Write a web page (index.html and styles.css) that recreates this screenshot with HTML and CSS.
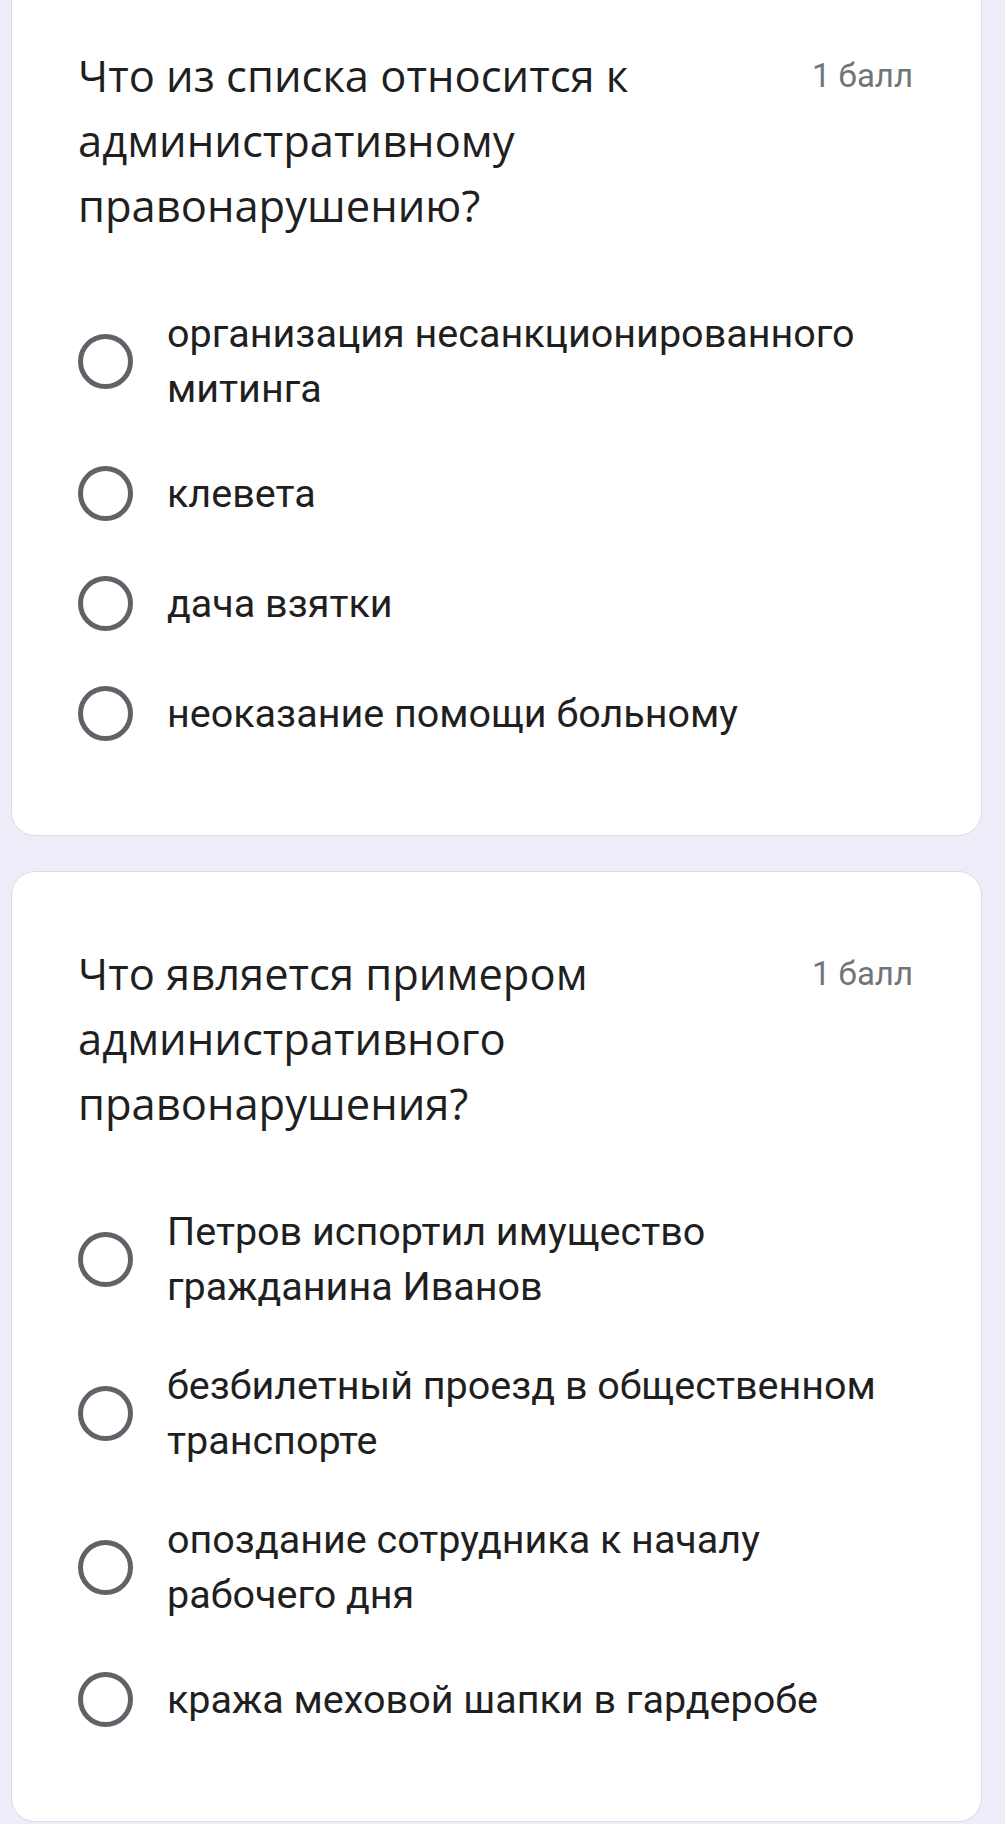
FILE: index.html
```html
<!DOCTYPE html>
<html lang="ru">
<head>
<meta charset="utf-8">
<title>Форма</title>
<link rel="stylesheet" href="styles.css">
</head>
<body>
<main class="list">
  <section class="card">
    <div class="head">
      <div class="title">Что из списка относится к административному правонарушению?</div>
      <div class="points">1 балл</div>
    </div>
    <div class="options">
      <label class="option"><span class="radio"></span><span class="text">организация несанкционированного митинга</span></label>
      <label class="option"><span class="radio"></span><span class="text">клевета</span></label>
      <label class="option"><span class="radio"></span><span class="text">дача взятки</span></label>
      <label class="option"><span class="radio"></span><span class="text">неоказание помощи больному</span></label>
    </div>
  </section>
  <section class="card">
    <div class="head">
      <div class="title">Что является примером административного правонарушения?</div>
      <div class="points">1 балл</div>
    </div>
    <div class="options">
      <label class="option"><span class="radio"></span><span class="text">Петров испортил имущество гражданина Иванов</span></label>
      <label class="option"><span class="radio"></span><span class="text">безбилетный проезд в общественном транспорте</span></label>
      <label class="option"><span class="radio"></span><span class="text">опоздание сотрудника к началу рабочего дня</span></label>
      <label class="option"><span class="radio"></span><span class="text">кража меховой шапки в гардеробе</span></label>
    </div>
  </section>
</main>
</body>
</html>
```

FILE: styles.css
```css
html, body {
  margin: 0;
  padding: 0;
  background: #efebf8;
}
body {
  font-family: Roboto, "Noto Sans", sans-serif;
  color: #202124;
  overflow: hidden;
}
.list {
  display: flex;
  flex-direction: column;
  gap: 35px;
  margin: -27px 23px 0 11px;
}
.card {
  background: #ffffff;
  border: 1.5px solid #dadce0;
  border-radius: 24px;
  padding: 69px 66px 67px 66px;
}
.head {
  display: flex;
  align-items: flex-start;
  gap: 30px;
  padding-bottom: 46px;
}
.title {
  flex: 1;
  font-family: "Open Sans", "Noto Sans", sans-serif;
  font-size: 43.5px;
  line-height: 65px;
  color: #1f1f1f;
}
.points {
  font-family: Roboto, sans-serif;
  font-size: 33px;
  line-height: 65px;
  color: #70757a;
  white-space: nowrap;
  padding-right: 2px;
}
.options {
  display: flex;
  flex-direction: column;
}
.option {
  display: flex;
  align-items: center;
  min-height: 110px;
  box-sizing: border-box;
  padding: 22px 0;
  gap: 34px;
}
.radio {
  flex: none;
  width: 55px;
  height: 55px;
  box-sizing: border-box;
  border: 5.5px solid #5f6368;
  border-radius: 50%;
}
.text {
  font-size: 39.5px;
  line-height: 55px;
  color: #1f1f1f;
  padding-right: 20px;
}
```
